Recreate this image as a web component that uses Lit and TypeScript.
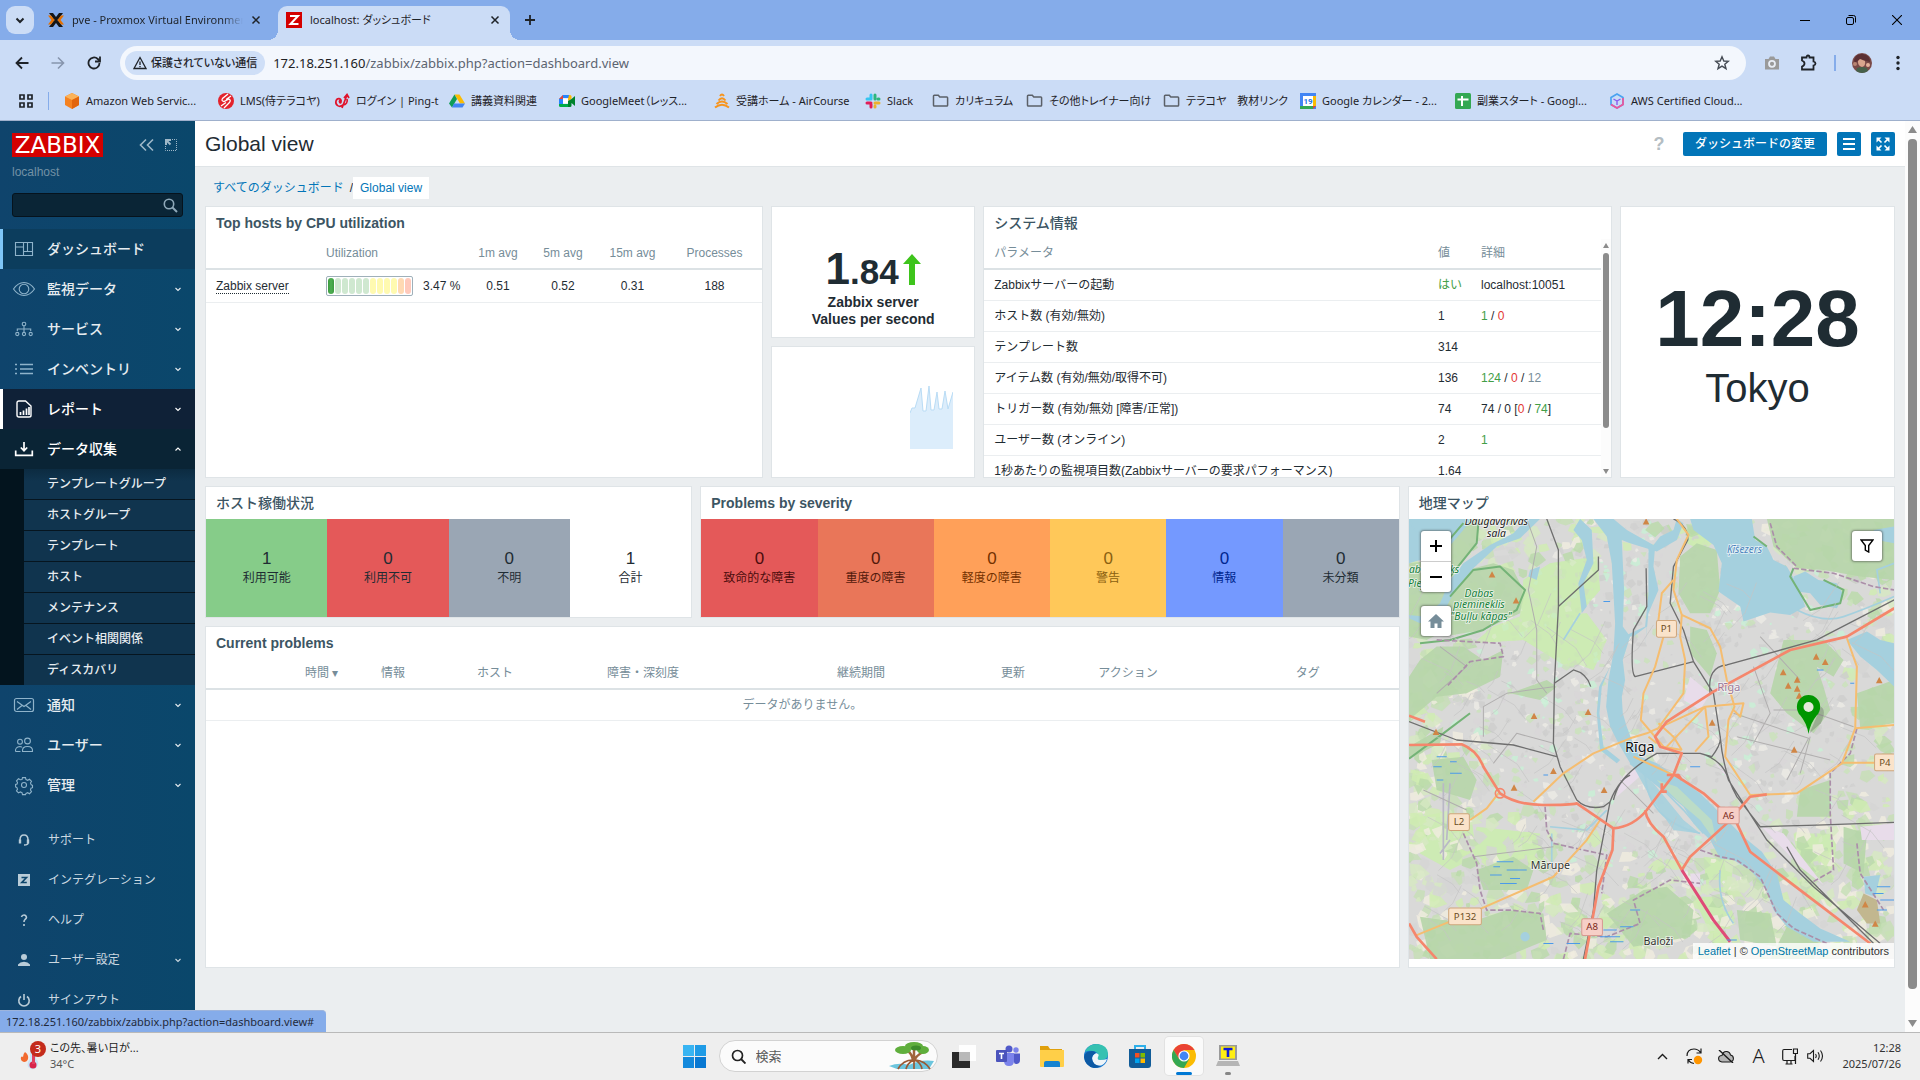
import { LitElement, html, svg, css, nothing } from "lit";
import { customElement } from "lit/decorators.js";
import { classMap } from "lit/directives/class-map.js";

const icon = (w: number, h: number, body: unknown, box = "0 0 24 24") =>
  html`<svg class="ico" width=${w} height=${h} viewBox=${box} fill="none" stroke="currentColor" stroke-width="2" aria-hidden="true">${body}</svg>`;

const chevron = (up = false) =>
  icon(8, 8, up ? svg`<path d="M1.500 5.500 4 3 6.500 5.500" stroke-width="1.100"/>` : svg`<path d="M1.500 3 4 5.500 6.500 3" stroke-width="1.100"/>`, "0 0 8 8");

const closeX = icon(10, 10, svg`<path d="M1.500 1.500 8.500 8.500M8.500 1.500 1.500 8.500" stroke-width="1.500"/>`, "0 0 10 10");

/* ---------- bookmark icons ---------- */
const bm = {
  aws: icon(16, 16, svg`<g stroke="none"><path d="M8 0 15 3.500V12L8 16 1 12V3.500z" fill="#f58220"/><path d="M8 0 15 3.500 8 7 1 3.500z" fill="#fbb35a"/><path d="M8 7 15 3.500V12L8 16z" fill="#e2650d"/></g>`, "0 0 16 16"),
  lms: icon(16, 16, svg`<circle cx="8" cy="8" r="8" fill="#e3232c" stroke="none"/><path d="M10 1 4.500 5.500Q3 8 6 8.500L11 6Q13.500 7.500 11 10L6 15M13 3 8 6.500M8 9.500 3 13" stroke="#fff" stroke-width="1.300"/>`, "0 0 16 16"),
  ping: icon(16, 16, svg`<path d="M9 12C5 15 1 12 2 8 3 4.500 8 5 7 9 6.500 11 4.500 9 6 7M8 15 13 2M10 5 13 1.500 15 5M9 12C12 12 14 9 13 6" stroke="#e0132c" stroke-width="1.700"/>`, "0 0 16 16"),
  drive: icon(16, 16, svg`<g stroke="none"><path d="M5.500 1.500h5L16 10.500h-5z" fill="#fbbc04"/><path d="M5.500 1.500 8 6 3 14.500 0 10.500z" fill="#0f9d58"/><path d="M5 10.500H16L13.500 14.500H3z" fill="#4285f4"/></g>`, "0 0 16 16"),
  meet: icon(16, 16, svg`<g stroke="none"><path d="M4 2h7v3H4v6H0V6z" fill="#2684fc"/><path d="M0 6 4 2v4z" fill="#ea4335"/><path d="M0 11h11v3H1.500Q0 14 0 12.500z" fill="#00ac47"/><path d="M10 2h1q1.500 0 1.500 1.500V6L8.500 8z" fill="#ffba00"/><path d="M12.500 6 16 3v10l-3.500-3v2.500q0 1.500-1.500 1.500H9V8z" fill="#00832d"/><path d="M4 5.500h5v5H4z" fill="#fff"/></g>`, "0 0 16 16"),
  air: icon(16, 16, svg`<path d="M6 3Q8 0 10 3M4.500 7.500Q8 3 11.500 7.500M2.500 11Q8 6 13.500 11M1 14.500Q8 9 15 14.500" stroke="#f7941d" stroke-width="2"/>`, "0 0 16 16"),
  slack: icon(16, 16, svg`<g stroke-width="3" stroke-linecap="round"><path d="M6 2v4M2 6h3" stroke="#36c5f0"/><path d="M10 2v4M14 6h-1" stroke="#2eb67d"/><path d="M10 10h4M10 13v1" stroke="#ecb22e"/><path d="M2 10h4M6 11v3" stroke="#e01e5a"/></g>`, "0 0 16 16"),
  folder: icon(17, 16, svg`<path d="M1.500 3q0-.8.800-.8h4l1.500 1.800h7q.8 0 .8.800v7.400q0 .8-.8.800H2.300q-.8 0-.8-.8z" stroke="#5b6068" stroke-width="1.500"/>`, "0 0 17 16"),
  cal: icon(16, 16, svg`<g stroke="none"><path d="M0 0h16v16H0z" fill="#4285f4"/><path d="M13 3h3v10h-3z" fill="#fbbc04"/><path d="M3 13h10v3H0v-3z" fill="#34a853"/><path d="M13 13h3l-3 3z" fill="#ea4335"/><path d="M3 3h10v10H3z" fill="#fff"/><text x="8" y="11" font-size="8" font-weight="700" text-anchor="middle" fill="#1a73e8" font-family="Roboto">19</text></g>`, "0 0 16 16"),
  sheet: icon(16, 16, svg`<rect width="16" height="16" rx="1.500" fill="#34a853" stroke="none"/><path d="M7 3v10M2.500 6.500h11" stroke="#fff" stroke-width="2"/>`, "0 0 16 16"),
  cert: icon(16, 16, svg`<path d="M8 1 14 4.500v7L8 15 2 11.500v-7z" stroke="#4aa3f0" stroke-width="1.700"/><path d="M14 5v6.500L8 15 2 11.500" stroke="#f0559a" stroke-width="1.700"/><path d="M4.500 6 8 8l3.500-2M8 8v4" stroke="#8a5cf0" stroke-width="1.400"/>`, "0 0 16 16"),
};

const BOOKMARKS: [unknown, string][] = [
  [bm.aws, "Amazon Web Servic..."], [bm.lms, "LMS(侍テラコヤ)"], [bm.ping, "ログイン | Ping-t"],
  [bm.drive, "講義資料関連"], [bm.meet, "GoogleMeet（レッス..."], [bm.air, "受講ホーム - AirCourse"],
  [bm.slack, "Slack"], [bm.folder, "カリキュラム"], [bm.folder, "その他トレイナー向け"],
  [bm.folder, "テラコヤ　教材リンク"], [bm.cal, "Google カレンダー - 2..."],
  [bm.sheet, "副業スタート - Googl..."], [bm.cert, "AWS Certified Cloud..."],
];

@customElement("browser-chrome")
class BrowserChrome extends LitElement {
  static styles = css`
    :host { display: block; font: 11px/16px "Noto Sans", "Noto Sans CJK JP", sans-serif; font-feature-settings: "palt"; color: #1f2328; background: #cbdcf6; border-bottom: 1px solid #9fb0cc; }
    .ico { display: block; flex: none; }
    button, a { font: inherit; color: inherit; background: none; border: 0; padding: 0; text-decoration: none; }
    .tabs { display: flex; height: 34px; padding: 6px 0 0 6px; background: #85acea; }
    .menu { width: 28px; height: 28px; border-radius: 9px; background: #cbdcf6; display: grid; place-items: center; }
    .tab { display: flex; align-items: center; gap: 8px; height: 28px; }
    .idle { width: 213px; margin-left: 14px; }
    .active { width: 232px; height: 34px; box-sizing: border-box; padding: 0 10px 6px 8px; background: #cbdcf6; border-radius: 9px 9px 0 0; margin-left: 17px; position: relative; }
    .active::before, .active::after { content: ""; position: absolute; bottom: 0; width: 10px; height: 10px; }
    .active::before { left: -10px; background: radial-gradient(circle at 0 0, transparent 10px, #cbdcf6 10px); }
    .active::after { right: -10px; background: radial-gradient(circle at 100% 0, transparent 10px, #cbdcf6 10px); }
    .name { flex: 1; overflow: hidden; white-space: nowrap; }
    .idle .name { mask-image: linear-gradient(90deg, #000 88%, transparent); }
    .plus { width: 40px; height: 28px; display: grid; place-items: center; }
    .win { margin-left: auto; display: flex; color: #000; }
    .win button { width: 46px; height: 28px; display: grid; place-items: center; }
    .bar { display: flex; align-items: center; height: 40px; padding-top: 6px; box-sizing: border-box; background: #cbdcf6; }
    .nav { display: flex; padding-left: 4px; }
    .nav button { width: 36px; height: 34px; display: grid; place-items: center; }
    .fwd { color: #8795ad; }
    .omni { flex: 1; display: flex; align-items: center; height: 34px; margin-left: 8px; border-radius: 17px; background: #f3f7fd; padding: 0 16px 0 5px; box-sizing: border-box; }
    .chip { display: flex; align-items: center; gap: 4px; height: 24px; padding: 0 8px; border-radius: 12px; background: #cfdff7; font-weight: 500; white-space: nowrap; }
    .url { flex: 1; margin-left: 8px; font: 13px/20px "Noto Sans", sans-serif; color: #202124; min-width: 0; display: flex; }
    .path { color: #5c6470; }
    .tools { display: flex; align-items: center; padding: 0 4px 0 8px; }
    .tools button { width: 36px; height: 32px; display: grid; place-items: center; }
    .split { width: 2px; height: 16px; margin: 0 8px; background: #85acea; }
    .marks { display: grid; grid-template-columns: 64px 154px 116px 115px 110px 155px 151px 67px 94px 137px 137px 155px 154px 1fr; height: 40px; padding-top: 2px; box-sizing: border-box; align-items: center; white-space: nowrap; }
    .apps { display: flex; align-items: center; gap: 15px; padding-left: 19px; }
    .apps i { width: 1px; height: 18px; background: #85acea; }
    .mark { display: flex; align-items: center; gap: 6px; }
  `;

  render() {
    return html`
      <div class="tabs">
        <button class="menu" aria-label="タブを検索">${icon(10, 10, svg`<path d="M1.500 3.500 5 7 8.500 3.500" stroke-width="2"/>`, "0 0 10 10")}</button>
        <div class="tab idle">
          ${icon(16, 16, svg`<g stroke="none"><path d="M1 1h4l3 4 3-4h4L10.500 7 8 9 5.500 7z" fill="#151515"/><path d="M1 15h4l3-4 3 4h4l-4.500-6L8 7 5.500 9z" fill="#151515"/><path d="M0 3.500h3L6.500 8 3 12.500H0L3.500 8zM16 3.500h-3L9.500 8l3.500 4.500h3L12.500 8z" fill="#e57000"/></g>`, "0 0 16 16")}
          <span class="name">pve - Proxmox Virtual Environment</span>
          <button aria-label="タブを閉じる">${closeX}</button>
        </div>
        <div class="tab active">
          ${icon(16, 16, svg`<path d="M0 0h16v16H0z" fill="#d40000" stroke="none"/><path d="M4 4h8L4.500 12H12.500" stroke="#fff" stroke-width="2"/>`, "0 0 16 16")}
          <span class="name">localhost: ダッシュボード</span>
          <button aria-label="タブを閉じる">${closeX}</button>
        </div>
        <button class="plus" aria-label="新しいタブ">${icon(12, 12, svg`<path d="M6 1v10M1 6h10" stroke-width="1.800"/>`, "0 0 12 12")}</button>
        <div class="win">
          <button aria-label="最小化">${icon(10, 10, svg`<path d="M0 5.500h10" stroke-width="1"/>`, "0 0 10 10")}</button>
          <button aria-label="元に戻す">${icon(10, 10, svg`<rect x=".5" y="2.500" width="7" height="7" rx="1.500" stroke-width="1"/><path d="M2.500.500H7.500Q9.500.500 9.500 2.500V7.500" stroke-width="1"/>`, "0 0 10 10")}</button>
          <button aria-label="閉じる">${icon(10, 10, svg`<path d="M0 0 10 10M10 0 0 10" stroke-width="1.100"/>`, "0 0 10 10")}</button>
        </div>
      </div>
      <div class="bar">
        <div class="nav">
          <button aria-label="戻る">${icon(14, 14, svg`<path d="M13.500 7H1.500M7 1.500 1.500 7 7 12.500" stroke-width="1.800"/>`, "0 0 14 14")}</button>
          <button class="fwd" aria-label="進む">${icon(14, 14, svg`<path d="M.5 7H12.500M7 1.500 12.500 7 7 12.500" stroke-width="1.600"/>`, "0 0 14 14")}</button>
          <button aria-label="再読み込み">${icon(14, 14, svg`<path d="M12.500 7A5.500 5.500 0 1 1 10.800 3L12.800 5" stroke-width="1.800"/><path d="M13 .5V5.500H8" stroke-width="1.800"/>`, "0 0 14 14")}</button>
        </div>
        <div class="omni">
          <button class="chip">${icon(14, 14, svg`<path d="M7 1.500 13 12.500H1z" stroke-width="1.300"/><path d="M7 5.500v3.500M7 10v1.300" stroke-width="1.300"/>`, "0 0 14 14")}保護されていない通信</button>
          <div class="url">172.18.251.160<span class="path">/zabbix/zabbix.php?action=dashboard.view</span></div>
          <button aria-label="ブックマーク">${icon(16, 16, svg`<path d="M8 1.800 9.800 6 14.300 6.300 10.800 9.200 12 13.700 8 11.200 4 13.700 5.200 9.200 1.700 6.300 6.200 6z" stroke="#454b54" stroke-width="1.400"/>`, "0 0 16 16")}</button>
        </div>
        <div class="tools">
          <button aria-label="スクリーンショット">${icon(16, 14, svg`<path d="M1 3H4.500L6 .5h4L11.500 3H15v10.500H1z" fill="#9a9a9a" stroke="none"/><circle cx="8" cy="7.800" r="3" fill="none" stroke="#e8edf5" stroke-width="1.800"/>`, "0 0 16 14")}</button>
          <button aria-label="拡張機能">${icon(18, 18, svg`<path d="M3 3.500H7.500Q7.500 1.500 9 1.500T10.500 3.500H14.500V7.500Q16.500 8 16.500 9.500T14.500 11.500V15.500H3V12.500Q5.500 11.500 5.500 9.500T3 6.500z" stroke-width="1.800"/>`, "0 0 18 18")}</button>
          <span class="split"></span>
          <button aria-label="プロフィール">${icon(20, 20, svg`<g stroke="none"><circle cx="10" cy="10" r="10" fill="#7a4a48"/><path d="M2 7Q4 0 11 1 18 2 18 9L14 8 8 6 3 10z" fill="#5b3034"/><path d="M6 8 8 6 13 8Q14 13 10 14 6 13 6 9z" fill="#d9a58e"/><path d="M5 15Q10 13 15 15L16 18Q10 22 4 18z" fill="#46604a"/><circle cx="3" cy="11" r="2" fill="#b98573"/><circle cx="16" cy="12" r="2" fill="#e3b19b"/></g>`, "0 0 20 20")}</button>
          <button aria-label="メニュー">${icon(4, 16, svg`<g fill="currentColor" stroke="none"><circle cx="2" cy="2.500" r="1.700"/><circle cx="2" cy="8" r="1.700"/><circle cx="2" cy="13.500" r="1.700"/></g>`, "0 0 4 16")}</button>
        </div>
      </div>
      <nav class="marks">
        <div class="apps">${icon(14, 14, svg`<path d="M1 1h4v4H1zM9 1h4v4H9zM1 9h4v4H1zM9 9h4v4H9z" stroke-width="1.700"/>`, "0 0 14 14")}<i></i></div>
        ${BOOKMARKS.map(([i, t]) => html`<a class="mark" href="#">${i}<span>${t}</span></a>`)}
      </nav>`;
  }
}

/* ---------- Zabbix sidebar ---------- */
const nav = {
  dash: svg`<path d="M.5 1.500h17v13H.5zM8.500 1.500v13M.5 6h8M8.500 10.500h9M12.500 1.500v9" stroke-width="1.100"/>`,
  eye: svg`<path d="M-1.500 8Q3 1.500 9 1.500T19.500 8Q15 14.500 9 14.500T-1.500 8z" stroke-width="1.100"/><circle cx="9" cy="8" r="4.800" stroke-width="1.100"/>`,
  svc: svg`<g stroke-width="1.100"><circle cx="9" cy="3" r="1.800"/><circle cx="2.300" cy="13" r="1.600"/><circle cx="9" cy="13" r="1.600"/><circle cx="15.700" cy="13" r="1.600"/><path d="M9 5v6M2.300 10V8h13.400v2"/></g>`,
  inv: svg`<path d="M5 3.500h13M5 8h13M5 12.500h13M0 3.500h2M0 8h2M0 12.500h2" stroke-width="1.500"/>`,
  rep: svg`<path d="M2 2Q2 0 4 0h6.500L16 5v9.500Q16 16 14 16H4Q2 16 2 14z" stroke-width="1.400"/><path d="M5.500 14v-3M8.500 14V9.500M11.500 14V7.500M14 14V6" stroke-width="1.700"/>`,
  data: svg`<path d="M.7 9.500v4.800h16.600V9.500M9 1v8M5.800 6.500 9 9.700l3.200-3.200" stroke-width="1.700"/>`,
  mail: svg`<rect x="-.5" y="1.500" width="19" height="13" rx="2" stroke-width="1.200"/><path d="M2 4.500 9 9.500l7-5M2 12.500l5-4M16 12.500l-5-4" stroke-width="1.200"/>`,
  users: svg`<g stroke-width="1.100"><circle cx="12.500" cy="4" r="2.900"/><circle cx="5" cy="4.700" r="2.400"/><path d="M7.500 14.500Q7 9.500 12.500 9.500T17.500 14.500zM.5 14.500Q0 10 5 9.500 7 9.500 7 10.500M.5 14.500H5.500"/></g>`,
  gear: svg`<circle cx="9" cy="8" r="2.500" stroke-width="1.100"/><path d="M7.500.6h3l.5 2 1.700.7 1.800-1 2 2-1 1.800.7 1.700 1.300.5v2.400l-1.500.5-.5 1.700 1 1.800-2 2-1.800-1-1.700.7-.5 1.200h-3L7 15.600l-1.700-.7-1.800 1-2-2 1-1.800-.7-1.700-1.200-.5V7.500l1.500-.5.400-1.400-1-1.800 2-2 1.800 1L7 2.600z" stroke-width="1.100"/>`,
};

interface Item { label: string; icon: unknown; state?: string; sub?: string[]; fold?: boolean }
const MENU: Item[] = [
  { label: "ダッシュボード", icon: nav.dash, state: "current", fold: false },
  { label: "監視データ", icon: nav.eye }, { label: "サービス", icon: nav.svc }, { label: "インベントリ", icon: nav.inv },
  { label: "レポート", icon: nav.rep, state: "hover" },
  { label: "データ収集", icon: nav.data, state: "open", sub: ["テンプレートグループ", "ホストグループ", "テンプレート", "ホスト", "メンテナンス", "イベント相関関係", "ディスカバリ"] },
  { label: "通知", icon: nav.mail }, { label: "ユーザー", icon: nav.users }, { label: "管理", icon: nav.gear },
];
const FOOT: [string, unknown, boolean][] = [
  ["サポート", svg`<path d="M2 9V6Q2 1 6 1T10 6V9M10 9Q10 11 6 11" stroke-width="1.500"/><path d="M2 5.500v4M10 5.500v4" stroke-width="2.400"/>`, false],
  ["インテグレーション", svg`<path d="M0 0h12v12H0z" fill="currentColor" stroke="none"/><path d="M3.500 3.500h5L3.800 8.500H8.800" stroke="#0d456b" stroke-width="1.600"/>`, false],
  ["ヘルプ", svg`<path d="M3.500 3Q4 1 6 1T8.500 3.300Q8.500 4.500 7 5.500 6 6.300 6 8M6 10v2" stroke-width="1.600"/>`, false],
  ["ユーザー設定", svg`<g fill="currentColor" stroke="none"><circle cx="6" cy="3" r="3"/><path d="M0 12V10.500Q2 7.800 6 7.800T12 10.500V12z"/></g>`, true],
  ["サインアウト", svg`<path d="M3 2.500A5.200 5.200 0 1 0 9 2.500M6 0v6" stroke-width="1.600"/>`, false],
];

@customElement("zbx-sidebar")
class ZbxSidebar extends LitElement {
  static styles = css`
    :host { display: block; width: 195px; overflow: hidden; background: linear-gradient(90deg, #0f446c, #0a476b); font: 500 14px/20px "Liberation Sans", "Noto Sans CJK JP", sans-serif; color: #e6ecf0; }
    .ico { display: block; flex: none; overflow: visible; }
    a { color: inherit; text-decoration: none; }
    ul { list-style: none; margin: 0; padding: 0; }
    .brand { display: flex; align-items: center; padding: 12px 12px 0; gap: 11px; }
    .logo { width: 91px; height: 24px; margin-right: auto; background: #d40000; color: #fff; font: 23px/25px "DejaVu Sans", sans-serif; text-align: center; }
    .brand button { border: 0; background: none; padding: 0; color: #9fb8c8; }
    .brand button:last-child { margin-right: 6px; }
    .server { margin: 5px 12px 0; font: 12px/20px "Liberation Sans", sans-serif; color: #7391a5; }
    .search { display: flex; align-items: center; box-sizing: border-box; height: 24px; margin: 11px 12px 12px; padding-right: 4px; background: #0a2536; border: 1px solid #06131d; border-radius: 3px; color: #8fa9b9; }
    .search input { flex: 1; min-width: 0; border: 0; background: none; color: #fff; height: 20px; }
    .search button { border: 0; background: none; padding: 0; color: inherit; }
    .item { display: flex; align-items: center; gap: 14px; height: 40px; box-sizing: border-box; padding: 0 13px 0 12px; border-left: 3px solid transparent; }
    .item > .ico:first-child { color: #8fb3ca; }
    .item span { flex: 1; white-space: nowrap; }
    .current { background: #0c3d5d; border-color: #7fc6f7; }
    .hover { background: #0f2137; border-color: #fff; color: #fff; }
    .open { background: #0a2435; color: #fff; }
    .hover > .ico:first-child, .open > .ico:first-child { color: #fff; }
    .sub { background: #03141e; padding-left: 24px; font-size: 12px; }
    .sub a { display: block; height: 30px; line-height: 30px; padding-left: 23px; background: #10344e; border-bottom: 1px solid #06151f; }
    .sub li:last-child a { height: 29px; border-bottom-color: #10344e; }
    .sub li:first-child a { background: linear-gradient(#0c2b41, #10344e 12px); }
    .foot { margin-top: 15px; font-size: 12px; font-weight: 400; color: #ccd9e1; }
    .foot .item { gap: 18px; padding-left: 15px; }
    .foot .item > .ico:first-child { color: #b9ccd8; }
  `;

  render() {
    return html`
      <div class="brand">
        <div class="logo">ZABBIX</div>
        <button aria-label="サイドバーを折りたたむ">${icon(15, 12, svg`<path d="M7 .5 1.500 6 7 11.500M14 .5 8.500 6 14 11.500" stroke-width="1.600"/>`, "0 0 15 12")}</button>
        <button aria-label="サイドバーを隠す">${icon(12, 12, svg`<path d="M1 6V1H6M1 1 5.500 5.500" stroke-width="2"/><path d="M7 .5h4.500v11H.5V7" stroke-width="1" stroke-dasharray="1 1"/>`, "0 0 12 12")}</button>
      </div>
      <div class="server">localhost</div>
      <form class="search" role="search"><input type="text" aria-label="検索" /><button type="button" aria-label="検索">${icon(15, 15, svg`<circle cx="6" cy="6" r="4.700" stroke-width="1.600"/><path d="M9.500 9.500 14 14" stroke-width="2"/>`, "0 0 15 15")}</button></form>
      <ul>
        ${MENU.map((m) => html`<li>
          <a class=${classMap({ item: true, [m.state ?? "plain"]: true })} href="#">${icon(18, 16, m.icon, "0 0 18 16")}<span>${m.label}</span>${m.fold === false ? nothing : chevron(!!m.sub)}</a>
          ${m.sub ? html`<ul class="sub">${m.sub.map((s) => html`<li><a href="#">${s}</a></li>`)}</ul>` : nothing}
        </li>`)}
      </ul>
      <ul class="foot">
        ${FOOT.map(([t, i, f]) => html`<li><a class="item" href="#">${icon(12, 12, i, "0 0 12 12")}<span>${t}</span>${f ? chevron() : nothing}</a></li>`)}
      </ul>`;
  }
}

/* ---------- map ---------- */
const P = (d: string, w: number, c: string, dash = "") => svg`<path d=${d} stroke=${c} stroke-width=${w} stroke-dasharray=${dash || "none"} fill="none" stroke-linejoin="round"/>`;

/* Small land parcels scattered with a fixed seed so that every render is the same. */
const parcels = (() => {
  let s = 20250726;
  const r = () => (s = (s * 1103515245 + 12345) % 2147483648) / 2147483648;
  const out: { d: string; c: string }[] = [];
  for (let i = 0; i < 2400; i++) {
    const x = 27 + r() * 1455, y = 117 + r() * 1320;
    const far = Math.hypot((x - 800) / 620, (y - 640) / 520) > 0.85 + r() * 0.3;
    const c = far ? ["#cfecb2", "#d6e9c2", "#c5deb5", "#f0ece0", "#d5d5d4", "#b9d9a9"][(r() * 6) | 0] : ["#cdcdcd", "#ecebe6", "#c9e2ba", "#d0d0d0", "#c8f0d6", "#d8d6d8"][(r() * 6) | 0];
    const k = far ? 8 + r() * 20 : 4 + r() * 11;
    const pt = (a: number) => `${Math.round(x + Math.cos(a) * k * (0.5 + r()))} ${Math.round(y + Math.sin(a) * k * (0.4 + r()))}`;
    out.push({ d: `M${pt(0.3)}L${pt(1.5)}L${pt(2.6)}L${pt(3.9)}L${pt(5.2)}z`, c });
  }
  return out;
})();
const streets = (() => {
  let s = 77;
  const r = () => (s = (s * 1103515245 + 12345) % 2147483648) / 2147483648;
  let d = "";
  for (let i = 0; i < 170; i++) {
    const x = 60 + r() * 1360, y = 300 + r() * 1080, a = (r() < 0.5 ? 0.35 : 1.9) + r() * 0.3, l = 30 + r() * 80;
    d += `M${Math.round(x)} ${Math.round(y)}l${Math.round(Math.cos(a) * l)} ${Math.round(Math.sin(a) * l)}l${Math.round(Math.cos(a + 0.4) * l * 0.6)} ${Math.round(Math.sin(a + 0.4) * l * 0.6)}`;
  }
  return d;
})();

const FOREST = [
  "M27 250 110 240 150 330 160 440 80 480 27 470z",
  "M150 350 200 270 280 250 340 270 375 340 360 400 250 450 130 470z",
  "M130 200 190 130 240 117 230 190 150 290z",
  "M27 590 60 540 110 500 190 500 250 540 310 510 300 590 200 640 110 650 27 720z",
  "M1100 117H1482V300L1380 290 1270 270 1190 265 1120 200z",
  "M840 230 890 190 950 210 960 330 930 400 870 400 835 340z",
  "M1150 480 1270 480 1330 540 1300 590 1250 560 1270 620 1290 690 1240 760 1160 700 1110 640 1130 560z",
  "M1370 640 1482 600V730L1380 745z", "M1200 930 1290 900 1290 1010 1190 1010z",
  "M95 840 190 830 230 900 210 960 110 930z",
  "M620 1300 730 1230 800 1220 880 1290 870 1370 700 1400z",
  "M230 1170 340 1130 400 1170 380 1230 250 1230z",
  "M60 1310 200 1330 320 1290 430 1300 440 1380 300 1437H90z",
  "M870 440 920 450 950 520 930 590 870 520z", "M1330 1040 1400 1060 1390 1180 1330 1150z",
  "M1160 1340 1260 1390 1240 1437H1110z", "M1010 1290 1110 1300 1130 1400 1020 1380z",
  "M330 640 420 660 470 620 440 600z", "M27 800 130 740 120 790 27 836z",
];
const MEADOW = [
  "M370 300 450 250 590 230 600 330 540 400 610 470 600 540 500 560 370 480 220 490 280 440 360 410z",
  "M440 410 560 400 620 480 580 570 500 540z", "M870 130 930 180 910 215 860 190z",
  "M60 1010 210 980 230 1130 150 1170 60 1120z", "M230 1040 420 1060 430 1150 300 1180 210 1110z",
  "M910 1130 1000 1140 990 1240 920 1230z", "M1180 1060 1310 1060 1300 1200 1200 1180z",
  "M880 1250 980 1250 1010 1330 930 1360z",
];
const PEAKS = [[738, 125], [276, 284], [348, 362], [402, 708], [564, 696], [108, 756], [460, 873], [342, 923], [612, 930], [936, 728], [1248, 530], [1275, 546], [1149, 577], [1164, 617], [1191, 599], [1191, 626], [1197, 647], [1437, 601], [1182, 809], [1395, 1273], [1425, 1331]];
const SHIELDS: [string, number, number, number, boolean][] = [["P1", 799, 447, 60, false], ["L2", 177, 1026, 62, false], ["P132", 195, 1309, 98, false], ["P4", 1454, 847, 62, false], ["A6", 985, 1006, 64, true], ["A8", 576, 1341, 62, true]];

const mapArt = svg`
  <path d="M27 117H1482V1437H27z" fill="#d9d9d8"/>
  ${MEADOW.map((d) => svg`<path d=${d} fill="#cdebb4"/>`)}
  ${parcels.map((p) => svg`<path d=${p.d} fill=${p.c} opacity=".8"/>`)}
  <g fill="#b7d6aa" opacity=".9">${FOREST.map((d) => svg`<path d=${d}/>`)}</g>
  <g fill="#cdebb4" opacity=".6">${MEADOW.slice(0, 2).map((d) => svg`<path d=${d}/>`)}</g>
  <path d="M870 590 930 640 900 690 850 660zM930 830 985 890 970 880zM1085 1040 1150 1060 1270 1215 1200 1160zM1380 1040 1482 1030V1080H1385zM870 1180 900 1180V1220H875zM660 900 720 850 730 880 650 950z" fill="#e8dcea"/>
  <path d="M1390 1240 1430 1260 1440 1330 1400 1330 1370 1290z" fill="#c2b78f"/>
  <g fill="#a5d0de">
    <path d="M27 117H215L190 150 130 220 27 250z"/>
    <path d="M420 117 360 175 290 200 220 265 165 330 130 400 60 430 27 415V405L70 410 120 370 150 300 190 250 270 195 340 160 380 117z"/>
    <path d="M580 117H640L680 150 760 195 780 170 820 150 830 117 850 130 830 180 770 215 690 190 665 180 672 330 668 440 690 470 668 540 675 600 665 650 668 700 680 740 695 780 720 830 770 850 830 890 900 940 960 1000 1030 1070 1085 1115 1130 1180 1150 1260 1200 1300 1260 1345 1350 1385H1240L1160 1340 1120 1290 1095 1220 1050 1170 1000 1140 960 1135 930 1080 880 1030 850 980 790 930 735 890 690 850 655 790 630 740 618 680 625 600 640 520 645 430 635 250 620 170z"/>
    <path d="M540 117 575 150 580 250 550 310 560 380 545 400 535 310 560 240 545 180 520 150z"/>
    <path d="M745 200 765 200 760 260 775 330 745 400 735 500 740 440 700 470 670 470 735 440 745 340z"/>
    <path d="M700 860 760 910 850 1020 900 1060 820 1050 750 950z" opacity=".9"/>
    <path d="M630 560 605 620 598 700 610 800 660 840 650 850 600 810 590 700 597 620z"/>
    <path d="M870 117H1055L1065 180 1100 200 1120 240 1160 260 1195 320 1215 380 1170 405 1110 398 1030 425 1020 380 955 335 965 250 940 195 880 150z"/>
    <path d="M1180 290 1215 275 1255 300 1310 310 1330 345 1310 385 1260 375 1230 340 1190 335z"/>
    <path d="M1340 480 1400 455 1440 480 1482 490V620L1430 570 1380 530z"/>
    <path d="M1390 1190 1440 1185 1425 1250 1395 1240z"/>
    <circle cx="375" cy="1370" r="14"/><path d="M1420 150 1482 140V190L1430 180zM390 270 420 260 410 300 385 290z"/>
  </g>
  <path d="M690 850 790 930 850 990 910 1060M1190 390Q1270 430 1330 410T1482 350M1482 250 1430 270 1440 340M450 1040 560 1050 620 990M735 880Q740 1020 900 1060M455 1060V1150M27 117Q60 200 150 180M540 400 490 480M960 1170Q950 1260 1000 1330" stroke="#a5d0de" stroke-width="5" fill="none"/>
  <path d="M770 900 830 960 900 1020 950 1090 935 1020 830 920z" fill="#cbe5b8" opacity=".6"/>
  ${P("M130 910V1140M150 910 140 1080M120 1120 150 1080", 5, "#b9b8c6")}
  ${P("M130 200 190 130M60 490 150 480 250 450 350 390 375 330 300 260 220 270 150 350M235 130 230 190 150 290M27 836 130 760 210 700M1180 265 1170 290 1200 340 1230 390 1320 370 1330 330 1270 300M1100 200 1060 170", 6, "#74b377")}
  ${P(streets, 2, "#c4c4c4")}
  ${P("M380 117 410 200 385 330 410 450 410 600 440 640M460 620 320 640 250 680 250 770M280 850 350 760 460 790M70 930 200 990M120 500 200 560 110 640M1060 560 1110 700 1060 790M1000 700 1225 775 1160 900M1230 770 1200 880M1360 740 1220 690 1120 690M220 1130 460 1100M660 900 760 1000M1010 770 1290 840M1080 470 1200 600", 3, "#b0aeae")}
  ${P("M435 980 440 1050 460 1090 620 1125 605 1240M110 480 300 490 310 530 210 545 140 620M900 1110 960 1130 1010 1140 1080 1190 1130 1300 1180 1345 1280 1390M1370 745 1350 820 1290 880 1290 1000 1300 1170 1230 1210M1180 265 1300 280 1420 320 1482 330M490 1437 510 1360 620 1370 720 1330 700 1260 810 1200 900 1210M190 1060 230 1150 240 1230 260 1290 330 1290 420 1300 430 1350M1370 1090 1380 1180 1450 1290M1110 130 1130 200 1190 260", 5, "#ab8fa9", "16 7")}
  ${P("M440 117 475 210 475 380 463 610 460 790 480 860 530 960Q560 990 610 980L630 965 590 1170 580 1290 550 1437M475 380 595 270V230M463 610 520 570Q560 580 572 620M27 725 170 780 340 795 470 830M630 965Q660 880 770 820H900L935 830Q965 790 960 770L940 640 880 545 850 450 810 370 820 260 863 180Q865 140 820 117M880 545 705 590Q690 580 700 450L740 380 738 265M640 960Q655 900 690 885M930 640Q920 560 980 555L1250 480 1482 360M900 820Q970 840 985 900L1100 1080 1240 1220 1440 1390M960 770Q970 880 1010 950L1080 1040 1250 1035 1482 1027M1160 1100 1200 1170 1420 1390", 4, "#6e6e6e")}
  ${P("M830 117 865 165 830 240 820 330 845 405 930 445 960 500 980 600 1003 680 985 720 975 830 1050 945 1190 940 1325 850 1365 745 1370 560 1340 475M845 405 840 470 855 540 850 640 770 750M820 300 785 340 775 420 790 470 765 560 730 640 722 720 790 800 845 810M400 965 490 880 580 820 690 775 740 760 915 680 1030 670 1020 710 1000 690M915 680 925 770 885 815M50 1365 210 1300 460 1190 560 1080 600 1020M210 1020 260 985 295 940M700 830 830 890M1365 745 1482 735M1325 848H1430M775 730 820 770 845 810M745 770 770 790M800 800 915 680", 6, "#f5bd70")}
  ${P("M27 795 185 793Q230 810 250 860L300 940Q350 975 430 975T530 970L640 1045Q700 1040 740 990L820 885 845 820 780 800 765 770 800 725 940 635 1170 510 1340 470 1482 385M640 1045 637 1110 595 1220 555 1437M735 990Q740 1030 790 1070L845 1170M825 885 910 940 955 980 1010 1030 1050 1115 1200 1230 1410 1390M845 1170 870 1130 980 1030 1050 950 1100 943M27 1330 50 1370 110 1437M27 707 75 725M800 885H835L845 900M785 910V935H800", 8, "#f5866c")}
  ${P("M845 1170 940 1320 990 1385", 9, "#df4b77")}
  <circle cx="300" cy="940" r="14" stroke="#f5866c" stroke-width="5" fill="none"/>
  ${P("M110 830h30M150 845h20M100 860h25M150 880h35M110 900h20M290 1145h50M280 1160h20M320 1170h60M270 1185h35M330 1195h30M300 1210h50M1430 1220h40M1420 1240h30M1440 1260h42M1430 1290h30M610 1350h40M660 1340h40M600 1370h60M630 1385h40M430 1390h30M500 1390h40M610 365h20M1250 570h20M1350 610h12M870 860h30M430 885h14M690 1290h30M980 1380h30", 3, "#4b9ae9")}
  ${PEAKS.map(([x, y]) => svg`<path d=${`M${x} ${y - 10}l10 19h-20z`} fill="#d08646"/>`)}
  ${SHIELDS.map(([t, x, y, w, red]) => svg`<rect x=${x - w / 2} y=${y - 25} width=${w} height="50" rx="5" fill=${red ? "#f6cfc7" : "#fae3ca"} stroke=${red ? "#d79a91" : "#cfa67c"} stroke-width="3"/><text x=${x} y=${y + 10} font-size="29" text-anchor="middle" fill=${red ? "#7b2a20" : "#6b4d24"}>${t}</text>`)}
  <g text-anchor="middle" stroke="#fff" stroke-opacity=".7" stroke-width="5" paint-order="stroke" fill="#333">
    <g font-style="italic" font-size="31" fill="#222"><text x="289" y="136">Daugavgrīvas</text><text x="289" y="171">sala</text></g>
    <g font-style="italic" font-size="31" fill="#15803a"><text x="237" y="350">Dabas</text><text x="237" y="385">piemineklis</text><text x="243" y="420">"Buļļu kāpas"</text><text x="92" y="280">Dabas parks</text><text x="72" y="322">Piejūra</text></g>
    <text x="1033" y="218" font-style="italic" font-size="30" fill="#4a83bd">Ķīšezers</text>
    <text x="986" y="632" font-size="34" fill="#9a7a9c">Rīga</text>
    <text x="719" y="816" font-size="43" fill="#111">Rīga</text>
    <text x="451" y="1167" font-size="32">Mārupe</text><text x="775" y="1395" font-size="32">Baloži</text>
  </g>
  <path d="M1228 760 1262 730Q1280 690 1262 680z" fill="#333" opacity=".25"/>
  <path d="M1225 762Q1220 730 1200 706 1190 695 1190 680A35 35 0 0 1 1260 680Q1260 695 1250 706 1230 730 1225 762z" fill="#009600"/><circle cx="1225" cy="681" r="15" fill="#e3e9da"/>
`;

@customElement("geo-map")
class GeoMap extends LitElement {
  static styles = css`
    :host { display: block; position: relative; height: 440px; overflow: hidden; font: 11px/16px "Liberation Sans", sans-serif; }
    .art { display: block; width: 100%; height: 100%; font-family: "Noto Sans", sans-serif; }
    .box { position: absolute; display: grid; background: #fff; border-radius: 3px; box-shadow: 0 0 2px 1px rgba(60, 60, 60, 0.5); }
    .box button { width: 30px; height: 30px; border: 0; padding: 0; background: none; display: grid; place-items: center; color: #000; }
    .zoom { left: 12px; top: 12px; }
    .zoom button + button { border-top: 1px solid #ccc; height: 31px; }
    .home { left: 12px; top: 87px; }
    .home button { color: #768d99; }
    .filter { right: 12px; top: 12px; }
    .credit { position: absolute; right: 0; bottom: 0; padding: 0 5px; background: rgba(255, 255, 255, 0.8); color: #333; white-space: nowrap; }
    .credit a { color: #0078a8; text-decoration: none; }
  `;
  render() {
    return html`
      <svg class="art" viewBox="27 117 1455 1320" preserveAspectRatio="xMidYMid slice" role="img" aria-label="Rīga">${mapArt}</svg>
      <div class="box zoom">
        <button aria-label="拡大">${icon(12, 12, svg`<path d="M6 0v12M0 6h12" stroke-width="2"/>`, "0 0 12 12")}</button>
        <button aria-label="縮小">${icon(12, 12, svg`<path d="M0 6h12" stroke-width="2"/>`, "0 0 12 12")}</button>
      </div>
      <div class="box home"><button aria-label="初期表示">${icon(16, 14, svg`<path d="M8 0 16 7.500H13.500V14H9.500V9.500H6.500V14H2.500V7.500H0z" fill="currentColor" stroke="none"/>`, "0 0 16 14")}</button></div>
      <div class="box filter"><button aria-label="フィルター">${icon(14, 14, svg`<path d="M1 1h12L8.700 6.500V13L5.300 11V6.500z" stroke-width="1.400"/>`, "0 0 14 14")}</button></div>
      <div class="credit"><a href="#">Leaflet</a> | © <a href="#">OpenStreetMap</a> contributors</div>`;
  }
}

/* ---------- dashboard ---------- */
const SYS: [string, unknown, unknown][] = [
  ["Zabbixサーバーの起動", html`<span class="ok">はい</span>`, "localhost:10051"],
  ["ホスト数 (有効/無効)", "1", html`<span class="ok">1</span> / <span class="bad">0</span>`],
  ["テンプレート数", "314", ""],
  ["アイテム数 (有効/無効/取得不可)", "136", html`<span class="ok">124</span> / <span class="bad">0</span> / <span class="dim">12</span>`],
  ["トリガー数 (有効/無効 [障害/正常])", "74", html`74 / 0 [<span class="bad">0</span> / <span class="ok">74</span>]`],
  ["ユーザー数 (オンライン)", "2", html`<span class="ok">1</span>`],
  ["1秒あたりの監視項目数(Zabbixサーバーの要求パフォーマンス)", "1.64", ""],
];
const HOSTS: [string, string, string][] = [["1", "利用可能", "avail"], ["0", "利用不可", "unavail"], ["0", "不明", "unknown"], ["1", "合計", "total"]];
const SEVERITY: [string, string][] = [["致命的な障害", "s5"], ["重度の障害", "s4"], ["軽度の障害", "s3"], ["警告", "s2"], ["情報", "s1"], ["未分類", "s0"]];
const SEG = ["on", "g", "g", "g", "g", "g", "y", "y", "y", "y", "o", "r"];

@customElement("zbx-dashboard")
class ZbxDashboard extends LitElement {
  static styles = css`
    :host { display: block; min-width: 0; overflow: hidden; background: #ebeef0; font: 12px/18px "Liberation Sans", "Noto Sans CJK JP", sans-serif; color: #1f2c33; }
    .ico { display: block; }
    a { color: #0275b8; text-decoration: none; }
    header { display: flex; align-items: center; gap: 10px; height: 45px; padding: 0 10px; background: #fff; border-bottom: 1px solid #dfe4e7; }
    h1 { margin: 0 auto 0 0; font: 21px/28px "Liberation Sans", sans-serif; }
    header button { height: 24px; width: 24px; padding: 0; border: 0; border-radius: 2px; background: #0275b8; color: #fff; display: grid; place-items: center; font: 500 12px/24px "Liberation Sans", "Noto Sans CJK JP", sans-serif; }
    header .edit { width: auto; padding: 0 12px; }
    header .help { background: none; color: #b4bdc3; font: bold 18px/24px "Liberation Sans", sans-serif; margin-right: 2px; }
    .crumbs { display: flex; align-items: center; height: 22px; padding: 10px 18px 3px; }
    .crumbs span { margin-left: 6px; }
    .crumbs .here { background: #fff; padding: 2px 7px; }
    .grid { display: grid; grid-template-columns: repeat(72, 1fr); grid-auto-rows: 70px; padding: 0 6px; }
    .w { margin: 4px; box-sizing: border-box; border: 1px solid #dfe4e7; background: #fff; min-width: 0; overflow: hidden; display: flex; flex-direction: column; }
    .w1 { grid-area: 1 / 1 / span 4 / span 24; } .w2 { grid-area: 1 / 25 / span 2 / span 9; } .w3 { grid-area: 3 / 25 / span 2 / span 9; }
    .w4 { grid-area: 1 / 34 / span 4 / span 27; } .w5 { grid-area: 1 / 61 / span 4 / span 12; }
    .w6 { grid-area: 5 / 1 / span 2 / span 21; } .w7 { grid-area: 5 / 22 / span 2 / span 30; } .w8 { grid-area: 5 / 52 / span 7 / span 21; }
    .w9 { grid-area: 7 / 1 / span 5 / span 51; }
    h2 { margin: 0; height: 32px; flex: none; padding-left: 10px; font: bold 14px/32px "Liberation Sans", "Noto Sans CJK JP", sans-serif; color: #3c5563; }
    .jp { font-weight: 500; }
    table { width: 100%; border-collapse: separate; border-spacing: 0; table-layout: fixed; }
    th { height: 27px; padding: 0 0 2px; font-weight: 400; color: #768d99; border-bottom: 2px solid #dce2e5; text-align: center; white-space: nowrap; }
    td { height: 30px; padding: 0; border-bottom: 1px solid #ebeef0; text-align: center; white-space: nowrap; }
    .l { text-align: left; padding-left: 10px; }
    .hosts td { height: 32px; }
    .host { color: #1f2c33; border-bottom: 1px dotted #1f2c33; }
    .util { display: flex; align-items: center; gap: 10px; }
    .gauge { display: flex; gap: 1px; padding: 1px; width: 83px; height: 16px; border: 1px solid #9fb0ba; border-radius: 2px; }
    .gauge i { flex: 1; border-radius: 3px; }
    .on { background: linear-gradient(90deg, #3d9a40, #4caf50, #3d9a40); } .g { background: #cfe8d0; } .y { background: #fffab0; } .o { background: #ffd9b3; } .r { background: #ffc9bb; }
    .c1 { width: 110px; } .c2 { width: 152px; } .c3 { width: 60px; } .c4 { width: 70px; } .c5 { width: 69px; } .c6 { width: 95px; }
    .value { flex: 1; display: flex; flex-direction: column; align-items: center; justify-content: flex-end; padding-bottom: 9px; font: bold 14px/17px "Liberation Sans", sans-serif; }
    .num { display: flex; align-items: flex-end; gap: 4px; line-height: 44px; }
    .big { font-size: 44px; } .dec { font-size: 35px; }
    .num div { display: flex; align-items: baseline; }
    .num .ico { margin-bottom: 9px; }
    .spark { flex: 1; display: flex; justify-content: flex-end; align-items: flex-end; padding: 0 21px 28px; }
    .scroll { flex: 1; min-height: 0; display: flex; }
    .view { flex: 1; min-width: 0; overflow: hidden; }
    .rail { width: 10px; display: flex; flex-direction: column; align-items: center; gap: 5px; padding: 4px 0 3px; box-sizing: border-box; background: #fcfcfc; color: #8b8b8b; }
    .rail i { width: 6px; flex: 1; border-radius: 3px; background: #8b8b8b; margin-bottom: 36px; }
    .v { width: 43px; } .d { width: 130px; }
    .ok { color: #429e47; } .bad { color: #e33734; } .dim { color: #768d99; }
    .clock { flex: 1; display: flex; flex-direction: column; align-items: center; justify-content: center; padding-top: 12px; }
    .time { font: bold 80px/80px "Liberation Sans", sans-serif; } .zone { font: 40px/58px "Liberation Sans", sans-serif; }
    .cells { flex: 1; display: grid; grid-auto-flow: column; grid-auto-columns: 1fr; }
    .cell { display: flex; flex-direction: column; align-items: center; justify-content: center; line-height: 18px; }
    .cell b { font: 17px/20px "Liberation Sans", sans-serif; }
    .avail { background: #86cc89; } .unavail { background: #e45959; } .unknown { background: #9aa6b4; }
    .s5 { background: #e45959; color: #4b0c0c; } .s4 { background: #e97659; color: #52190b; } .s3 { background: #ffa059; color: #733100; }
    .s2 { background: #ffc859; color: #8a6010; } .s1 { background: #7499ff; color: #00268e; } .s0 { background: #9aa6b4; }
    .p1 { width: 141px; } .p2 { width: 92px; } .p3 { width: 112px; } .p4 { width: 184px; } .p5 { width: 252px; } .p6 { width: 52px; } .p7 { width: 178px; }
    .sort { text-align: right; padding-right: 9px; }
    .sort span { margin-left: 3px; }
    .none { color: #768d99; }
  `;

  render() {
    return html`
      <header>
        <h1>Global view</h1>
        <button class="help" aria-label="ヘルプ">?</button>
        <button class="edit">ダッシュボードの変更</button>
        <button aria-label="操作">${icon(16, 16, svg`<path d="M2 3h12M2 8h12M2 13h12" stroke-width="2"/>`, "0 0 16 16")}</button>
        <button aria-label="全画面">${icon(16, 16, svg`<path d="M6.500 6.500 3 3M9.500 6.500 13 3M6.500 9.500 3 13M9.500 9.500 13 13" stroke-width="1.600"/><path d="M1.500 6.500V1.500h5zM9.500 1.500h5v5zM1.500 9.500v5h5zM14.500 9.500v5h-5z" fill="currentColor" stroke="none"/>`, "0 0 16 16")}</button>
      </header>
      <nav class="crumbs"><a href="#">すべてのダッシュボード</a><span>/</span><a class="here" href="#">Global view</a></nav>
      <div class="grid">
        <section class="w w1"><h2>Top hosts by CPU utilization</h2>
          <table class="hosts">
            <colgroup><col class="c1" /><col class="c2" /><col class="c3" /><col class="c4" /><col class="c5" /><col class="c6" /></colgroup>
            <thead><tr><th></th><th class="l">Utilization</th><th>1m avg</th><th>5m avg</th><th>15m avg</th><th>Processes</th></tr></thead>
            <tbody><tr><td class="l"><a class="host" href="#">Zabbix server</a></td>
              <td class="l"><div class="util"><div class="gauge">${SEG.map((s) => html`<i class=${s}></i>`)}</div>3.47 %</div></td>
              <td>0.51</td><td>0.52</td><td>0.31</td><td>188</td></tr></tbody>
          </table>
        </section>
        <section class="w w2"><div class="value">
          <div class="num"><div><span class="big">1</span><span class="dec">.84</span></div>${icon(18, 31, svg`<path d="M9 0 18 10H12V31H6V10H0z" fill="#3ec41c" stroke="none"/>`, "0 0 18 31")}</div>
          <div>Zabbix server</div><div>Values per second</div>
        </div></section>
        <section class="w w3"><div class="spark">${icon(43, 64, svg`<path d="M0 64V28L2 23H5L11 3 13 26H16L19 1 21 25H24L27 7 29 24H32L35 6 38 24 43 7V64z" fill="#dcedfb" stroke="none"/><path d="M0 28 2 23H5L11 3 13 26H16L19 1 21 25H24L27 7 29 24H32L35 6 38 24 43 7" stroke="#b9dcf5" stroke-width="1"/>`, "0 0 43 64")}</div></section>
        <section class="w w4"><h2 class="jp">システム情報</h2>
          <div class="scroll"><div class="view">
            <table class="sys"><colgroup><col /><col class="v" /><col class="d" /></colgroup>
              <thead><tr><th class="l">パラメータ</th><th class="l">値</th><th class="l">詳細</th></tr></thead>
              <tbody>${SYS.map(([a, b, c]) => html`<tr><td class="l">${a}</td><td class="l">${b}</td><td class="l">${c}</td></tr>`)}</tbody>
            </table></div>
            <div class="rail">${icon(6, 5, svg`<path d="M3 0 6 5H0z" fill="currentColor" stroke="none"/>`, "0 0 6 5")}<i></i>${icon(6, 5, svg`<path d="M0 0H6L3 5z" fill="currentColor" stroke="none"/>`, "0 0 6 5")}</div>
          </div>
        </section>
        <section class="w w5"><div class="clock"><div class="time">12:28</div><div class="zone">Tokyo</div></div></section>
        <section class="w w6"><h2 class="jp">ホスト稼働状況</h2><div class="cells">${HOSTS.map(([n, t, c]) => html`<div class="cell ${c}"><b>${n}</b>${t}</div>`)}</div></section>
        <section class="w w7"><h2>Problems by severity</h2><div class="cells">${SEVERITY.map(([t, c]) => html`<div class="cell ${c}"><b>0</b>${t}</div>`)}</div></section>
        <section class="w w8"><h2 class="jp">地理マップ</h2><geo-map></geo-map></section>
        <section class="w w9"><h2>Current problems</h2>
          <table>
            <colgroup><col class="p1" /><col class="p2" /><col class="p3" /><col class="p4" /><col class="p5" /><col class="p6" /><col class="p7" /><col /></colgroup>
            <thead><tr><th class="sort">時間<span>▾</span></th><th>情報</th><th>ホスト</th><th>障害・深刻度</th><th>継続期間</th><th>更新</th><th>アクション</th><th>タグ</th></tr></thead>
            <tbody><tr><td class="none" colspan="8">データがありません。</td></tr></tbody>
          </table>
        </section>
      </div>`;
  }
}

/* ---------- taskbar ---------- */
const APPS: [string, unknown, string][] = [
  ["タスク ビュー", svg`<path d="M0 8h18v16H0z" fill="#2a2a2a"/><path d="M7 1h17v16H7z" fill="#fff" opacity=".9"/><path d="M7 8h11v9H7z" fill="#b9b9b9"/>`, ""],
  ["Teams", svg`<circle cx="13" cy="5" r="3.500" fill="#5059c9"/><circle cx="20" cy="6" r="2.700" fill="#7b83eb"/><path d="M8 9h10v8q0 5-5 5t-5-5z" fill="#7b83eb"/><path d="M18 9.500h6V16q0 4-4 4-2 0-2-2z" fill="#5059c9"/><rect y="6" width="11" height="12" rx="1" fill="#4b53bc"/><path d="M3 9.500h5M5.500 9.500V15" stroke="#fff" stroke-width="1.600"/>`, ""],
  ["エクスプローラー", svg`<path d="M0 2h8l2 3h12v8H0z" fill="#e0a00c"/><path d="M0 6h24v16q0 1-1 1H1q-1 0-1-1z" fill="#ffcf48"/><path d="M4 23v-4q0-2 2-2h12q2 0 2 2v4z" fill="#1683d0"/>`, ""],
  ["Edge", svg`<circle cx="12" cy="12" r="12" fill="#1679d1"/><path d="M1 8Q4 0 13 0q11 1 11 10 0 6-8 6-3 0-2-3 1-5-5-6Q4 6 1 8z" fill="#35c1b1"/><path d="M14 13q-1 3 2 3 4 0 7-1-2 6-8 7-6-1-7-7 0-4 4-6 4 1 2 4z" fill="#eef4f8"/><path d="M8 14q0 7 9 8-3 2-7 2Q1 22 0 13q1-6 8-6 3 0 4 2-4 2-4 5z" fill="#0c59a4"/>`, ""],
  ["Microsoft Store", svg`<path d="M7 6V2h10v4" stroke="#2fb0ea" stroke-width="2"/><path d="M1 5h22v16q0 3-3 3H4q-3 0-3-3z" fill="#115c98"/><path d="M7 9h4.500v4.500H7z" fill="#f25022"/><path d="M12.500 9H17v4.500h-4.500z" fill="#7fba00"/><path d="M7 14.500h4.500V19H7z" fill="#00a4ef"/><path d="M12.500 14.500H17V19h-4.500z" fill="#ffb900"/>`, ""],
  ["Google Chrome", svg`<circle cx="12" cy="12" r="12" fill="#fbbc04"/><path d="M1.600 6A12 12 0 0 1 22.400 6H12L7 15z" fill="#ea4335"/><path d="M1.600 6A12 12 0 0 0 12 24L17.200 15 7 15z" fill="#34a853"/><circle cx="12" cy="12" r="5.600" fill="#fff"/><circle cx="12" cy="12" r="4.400" fill="#4285f4"/>`, "active"],
  ["Tera Term", svg`<path d="M3 1h18v15H3z" fill="#9a9a9a"/><path d="M5 2.500h14v12H5z" fill="#ffee12"/><path d="M7.500 5h9M12 5v8" stroke="#0f1ad8" stroke-width="2.600"/><path d="M2 17h20l2 5H0z" fill="#b5b5b5"/>`, "run"],
];

@customElement("task-bar")
class TaskBar extends LitElement {
  static styles = css`
    :host { display: grid; grid-template-columns: 1fr auto 1fr; align-items: center; height: 48px; box-sizing: border-box; border-top: 1px solid #b9b9b9; padding-bottom: 1px; background: #eee; font: 11px/16px "Noto Sans", "Noto Sans CJK JP", sans-serif; font-feature-settings: "palt"; color: #222; }
    .ico { display: block; flex: none; }
    button { border: 0; padding: 0; background: none; font: inherit; color: inherit; }
    .weather { display: flex; align-items: center; gap: 4px; padding-left: 20px; text-align: left; justify-self: start; }
    .deg { display: block; color: #555; }
    .mid { display: flex; align-items: center; padding-left: 12px; }
    .find { display: flex; align-items: center; gap: 10px; width: 219px; height: 32px; box-sizing: border-box; margin: 0 4px 0 13px; padding: 0 3px 0 11px; border: 1px solid #d2d2d2; border-radius: 16px; background: #fbfbfb; }
    .find input { flex: 1; min-width: 0; border: 0; background: none; padding: 0; font: 13px/20px "Noto Sans CJK JP", sans-serif; color: #555; outline: 0; }
    .find input::placeholder { color: #5a5a5a; }
    .app { position: relative; width: 38px; height: 38px; margin: 0 3px; display: grid; place-items: center; border-radius: 4px; }
    .active { background: #fafafa; box-shadow: 0 0 0 1px #e2e2e2; }
    .active::after, .run::after { content: ""; position: absolute; bottom: 0; left: 11px; width: 16px; height: 3px; border-radius: 2px; background: #0078d4; }
    .run::after { left: 16px; width: 6px; background: #868686; }
    .tray { display: flex; align-items: center; justify-self: end; padding-right: 19px; color: #1b1b1b; }
    .tray button { width: 32px; display: grid; place-items: center; }
    .tray .sound { width: 18px; }
    .tray .ime { font-size: 20px; font-weight: 300; line-height: 20px; }
    .when { text-align: right; padding-left: 18px; color: #333; }
    .when span { display: block; }
  `;
  render() {
    return html`
      <button class="weather">
        ${icon(26, 30, svg`<g stroke="none"><path d="M5 11Q9 14 8 18 7 21 4 21 0 20 1 16 2 15 3 16 3 13 5 11z" fill="#f26a2e"/><path d="M10 8h6v10q3 2 2 6-2 5-7 4-5-2-3-7l2-3z" fill="#c9e4f7"/><circle cx="13" cy="24" r="3.500" fill="#d8234b"/><path d="M12 10h3v13h-3z" fill="#e0405f"/><circle cx="18" cy="8" r="8" fill="#c42b1c"/><text x="18" y="12" font-size="11" fill="#fff" text-anchor="middle" font-family="Noto Sans">3</text></g>`, "0 0 26 30")}
        <span>この先、暑い日が...<span class="deg">34°C</span></span>
      </button>
      <div class="mid">
        <button aria-label="スタート">${icon(23, 23, svg`<g stroke="none" fill="#1389dc"><path d="M0 0h11v11H0z" fill="#38b4f2"/><path d="M12 0h11v11H12z" fill="#1f9be6"/><path d="M0 12h11v11H0z"/><path d="M12 12h11v11H12z" fill="#0878d2"/></g>`, "0 0 23 23")}</button>
        <label class="find">${icon(15, 15, svg`<circle cx="6.500" cy="6.500" r="5" stroke-width="1.700"/><path d="M10 10l4.500 4.500" stroke-width="1.900"/>`, "0 0 15 15")}<input type="search" placeholder="検索" aria-label="検索" />
          ${icon(45, 28, svg`<path d="M0 24Q10 20 20 23 32 17 45 19L40 27H8z" fill="#6cc5dd" stroke="none"/><path d="M24 20Q24 13 19 9M25 20Q26 14 34 10M25 18V6" stroke="#a0643a" stroke-width="2.500"/><path d="M24 18Q14 18 9 27M24 18Q18 22 17 27M25 18V27M26 18Q32 21 33 27M27 18Q36 19 41 27" stroke="#9a5a34" stroke-width="1.700"/><g fill="#5fae3c" stroke="none"><ellipse cx="14" cy="8" rx="8" ry="4"/><ellipse cx="25" cy="4" rx="9" ry="4"/><ellipse cx="34" cy="8" rx="6" ry="4"/></g><ellipse cx="27" cy="6" rx="5" ry="2.500" fill="#3d8c2b" stroke="none"/>`, "0 0 45 28")}
        </label>
        ${APPS.map(([n, i, c]) => html`<button class="app ${c}" aria-label=${n}><svg class="ico" width="24" height="24" viewBox="0 0 24 24" fill="none" aria-hidden="true">${i}</svg></button>`)}
      </div>
      <div class="tray">
        <button aria-label="隠れているインジケーター">${icon(11, 7, svg`<path d="M1 6 5.500 1.500 10 6" stroke-width="1.400"/>`, "0 0 11 7")}</button>
        <button aria-label="更新">${icon(17, 17, svg`<path d="M1 8Q1 1 8 1 12 1 14.500 4.500M15 .5V5H10.500M2 15.500V11.500H6M2 11.500Q4 15 8 15.500" stroke-width="1.200"/><circle cx="12" cy="12" r="4.200" fill="#ff9500" stroke="none"/>`, "0 0 17 17")}</button>
        <button aria-label="OneDrive">${icon(16, 13, svg`<path d="M4 12Q.6 11.500.6 8.500T4 5.500Q5 1 9 1.500 12 2 12.500 5 15.400 5.500 15.400 8.500T12 12z" fill="#b5b5b5" stroke-width="1.100"/><path d="M1 0 15 13" stroke-width="1.400"/>`, "0 0 16 13")}</button>
        <button class="ime" aria-label="入力モード">A</button>
        <button aria-label="ネットワーク">${icon(16, 17, svg`<path d="M10 1.500H2Q.7 1.500.7 3v8q0 1.500 1.300 1.500h11V8M5 12.500v3.500M9 12.500V16M3.500 16h7M11.500 1h4v4.500h-4zM13.500 5.500V16" stroke-width="1.200"/>`, "0 0 16 17")}</button>
        <button class="sound" aria-label="音量">${icon(17, 14, svg`<path d="M.7 4.700H3L6.500 1.500v11L3 9.300H.7z" stroke-width="1.100"/><path d="M8.500 5Q10 7 8.500 9M11 3.200Q13.500 7 11 10.800M13.500 1.500Q17.500 7 13.500 12.500" stroke-width="1.100"/>`, "0 0 17 14")}</button>
        <div class="when"><span>12:28</span><span>2025/07/26</span></div>
      </div>`;
  }
}

@customElement("app-root")
class AppRoot extends LitElement {
  static styles = css`
    :host { display: grid; grid-template-rows: auto minmax(0, 1fr) auto; height: 100vh; overflow: hidden; }
    .page { display: grid; grid-template-columns: auto minmax(0, 1fr) 15px; min-height: 0; position: relative; }
    zbx-sidebar { min-height: 0; }
    .bar { display: flex; flex-direction: column; align-items: center; gap: 6px; padding: 5px 0; background: #fcfcfc; color: #8b8b8b; }
    .bar i { flex: 1; width: 9px; border-radius: 4px; background: #8b8b8b; margin-bottom: 25px; }
    .ico { display: block; flex: none; }
    .status { position: absolute; left: 0; bottom: 0; box-sizing: border-box; height: 22px; padding: 0 12px 0 6px; border-radius: 0 4px 0 0; background: #85acea; border-top: 1px solid #9db4dc; color: #1f2a3a; font: 11px/21px "Noto Sans", sans-serif; }
  `;
  render() {
    return html`
      <browser-chrome></browser-chrome>
      <div class="page">
        <zbx-sidebar></zbx-sidebar>
        <zbx-dashboard></zbx-dashboard>
        <div class="bar">${icon(9, 7, svg`<path d="M4.500 0 9 7H0z" fill="currentColor" stroke="none"/>`, "0 0 9 7")}<i></i>${icon(9, 7, svg`<path d="M0 0H9L4.500 7z" fill="currentColor" stroke="none"/>`, "0 0 9 7")}</div>
        <div class="status">172.18.251.160/zabbix/zabbix.php?action=dashboard.view#</div>
      </div>
      <task-bar></task-bar>`;
  }
}
